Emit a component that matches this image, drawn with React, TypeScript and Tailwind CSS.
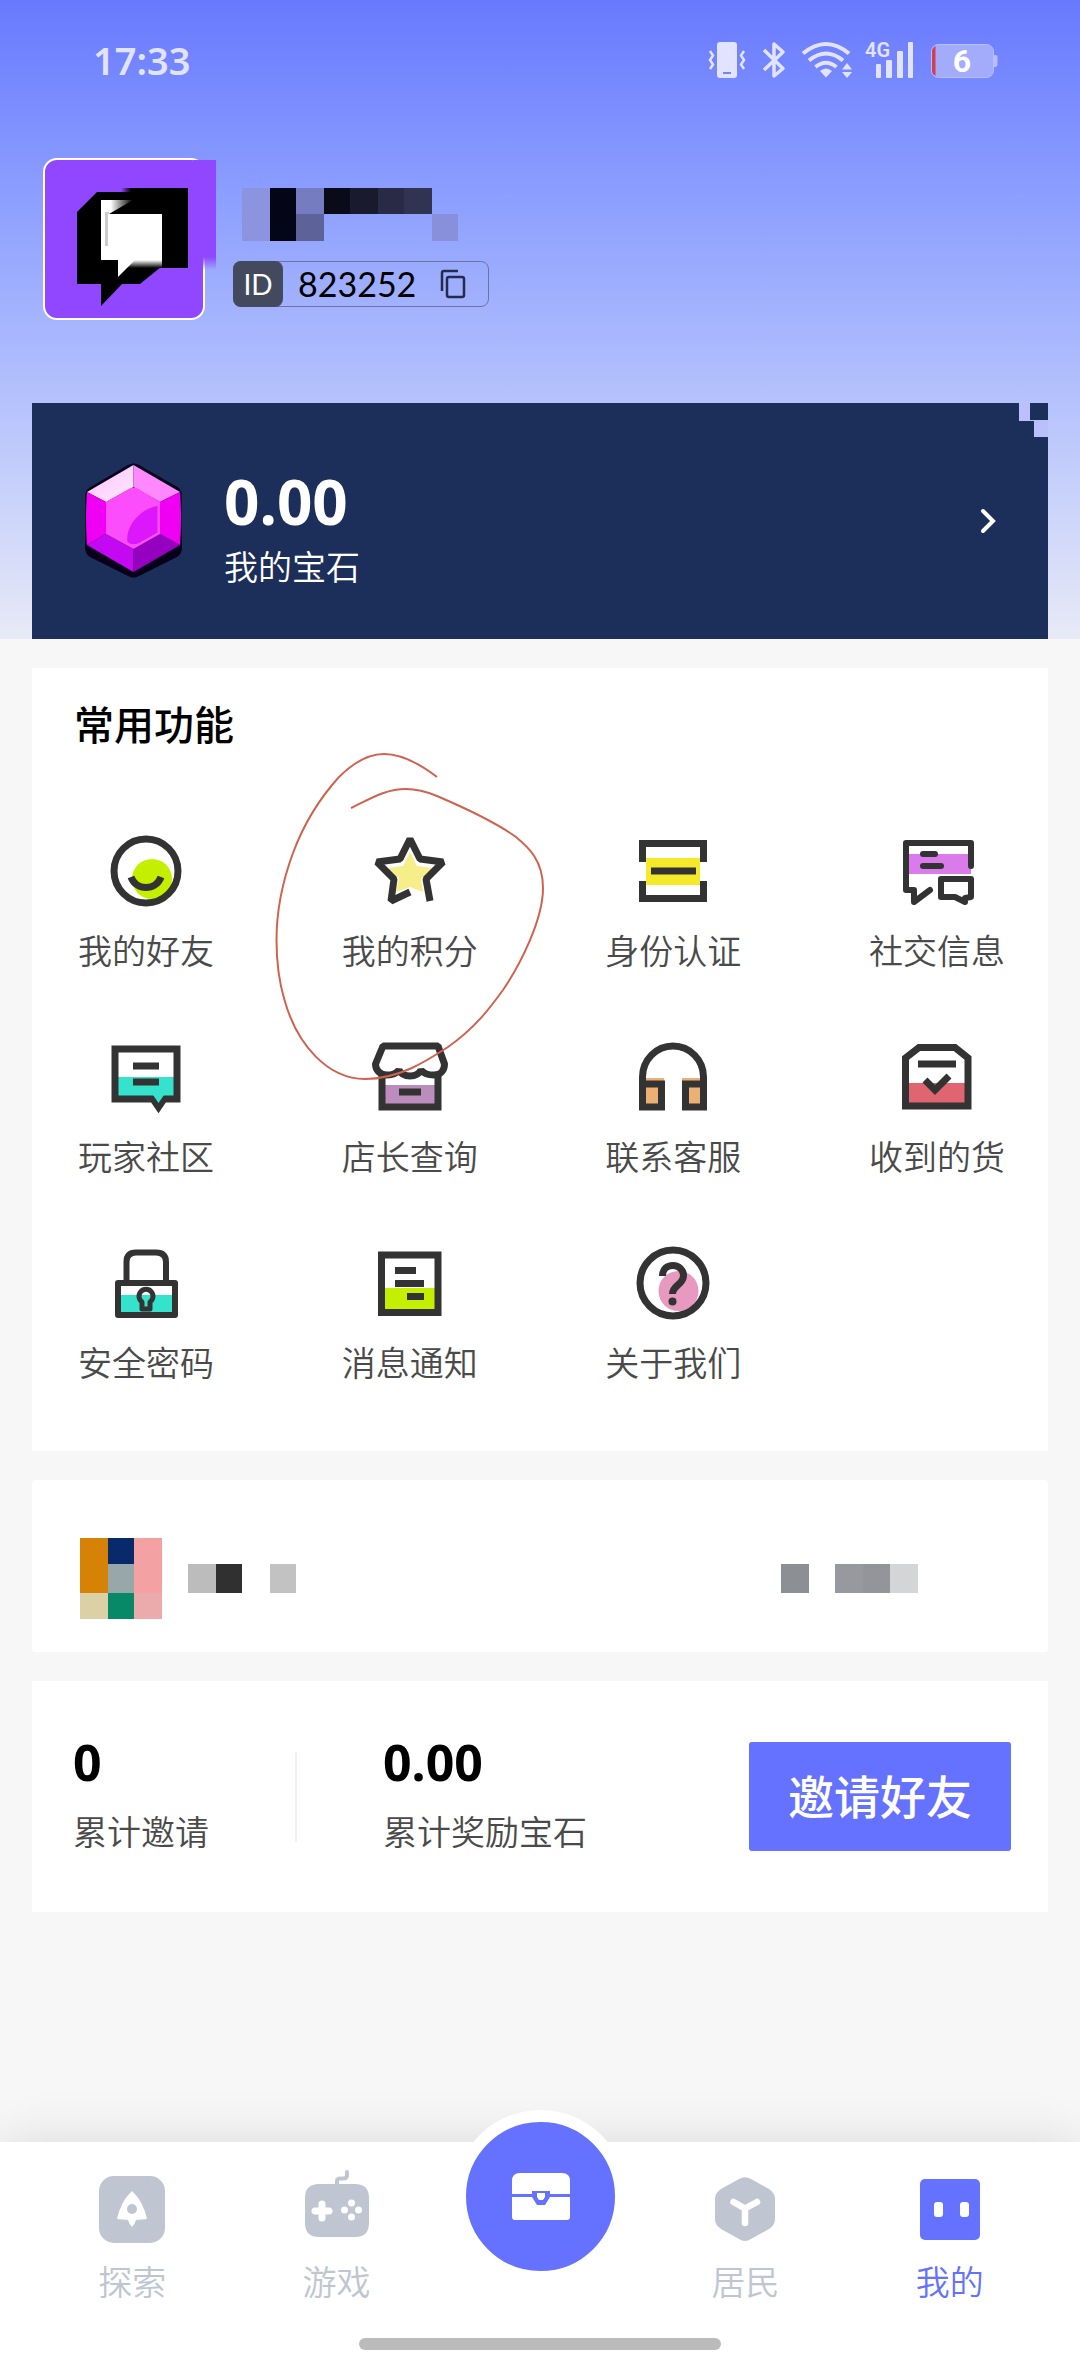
import { useState } from 'react';
import type { ReactNode } from 'react';

const INK = '#333333';

function StatusIcons() {
  return (
    <svg width="290" height="46" viewBox="0 -4 290 46" fill="#e2e4ff" aria-hidden="true">
      {/* vibrate */}
      <rect x="9" y="1" width="20" height="36" rx="3" />
      <rect x="15" y="31" width="8" height="2" fill="#7683fc" />
      <path
        d="M2 10L5 14.500 2 19 5 23.500 2 28M36 10L33 14.500 36 19 33 23.500 36 28"
        fill="none"
        stroke="#e2e4ff"
        strokeWidth="2.500"
      />
      {/* bluetooth */}
      <path
        d="M56 9L75 27.500 66 35V3L75 11 56 29"
        fill="none"
        stroke="#e2e4ff"
        strokeWidth="3.500"
        strokeLinejoin="round"
      />
      {/* wifi */}
      <g fill="none" stroke="#e2e4ff" strokeWidth="4">
        <path d="M95 12.500Q118 -6.500 141 12.500" />
        <path d="M101 19.500Q118 5.500 135 19.500" />
        <path d="M107.500 26Q118 17.500 128.500 26" />
      </g>
      <path d="M112 30Q118 25 124 30L118 36.500Z" />
      <path d="M139 22L144 28.500H134ZM139 37L144 31H134Z" />
      {/* signal */}
      <text x="157" y="16" fontSize="20" fontWeight="600" fontFamily="Roboto, sans-serif">
        4G
      </text>
      <rect x="168" y="23" width="5" height="14" rx="1" />
      <rect x="178" y="19" width="6" height="18" rx="1" />
      <rect x="189" y="10" width="6" height="27" rx="1" />
      <rect x="200" y="1" width="5" height="36" rx="1" />
      {/* battery */}
      <rect x="223.500" y="3.500" width="62" height="33" rx="7" fill="#a3abfb" stroke="#b7bdfd" />
      <path d="M286 14h1.500a2 2 0 0 1 2 2v8a2 2 0 0 1-2 2H286z" fill="#b7bdfd" />
      <path d="M227.500 5v30c-2-1-3.500-3-3.500-5V10c0-2 1.500-4 3.500-5z" fill="#d0404f" />
      <text
        x="254"
        y="31"
        textAnchor="middle"
        fontSize="32"
        fontWeight="700"
        fill="#ffffff"
        fontFamily="Roboto, sans-serif"
      >
        6
      </text>
    </svg>
  );
}

function Avatar() {
  return (
    <svg width="176" height="164" viewBox="0 0 176 164" className="shrink-0" role="img" aria-label="头像">
      <defs>
        <linearGradient id="bleed" x1="0" y1="0" x2="0" y2="1">
          <stop offset="0.88" stopColor="#9147ff" />
          <stop offset="1" stopColor="#9147ff" stopOpacity="0" />
        </linearGradient>
        <linearGradient id="edge" x1="0" y1="0" x2="1" y2="0">
          <stop offset="0" stopColor="#000" stopOpacity="0" />
          <stop offset="0.15" stopColor="#000" />
        </linearGradient>
        <linearGradient id="shineX" x1="0" y1="0" x2="1" y2="0">
          <stop offset="0" stopColor="#fff" />
          <stop offset="0.3" stopColor="#fff" />
          <stop offset="1" stopColor="#fff" stopOpacity="0" />
        </linearGradient>
        <linearGradient id="shineY" x1="0" y1="0" x2="0" y2="1">
          <stop offset="0" stopColor="#fff" />
          <stop offset="1" stopColor="#fff" stopOpacity="0" />
        </linearGradient>
      </defs>
      <rect x="1" y="1" width="160" height="160" rx="13" fill="#9147ff" stroke="#fff" strokeWidth="2" />
      <rect x="150" y="2" width="23" height="110" fill="url(#bleed)" />
      <path d="M34 54L54 34H134V96L97 126H79L58 148V126H34Z" />
      <rect x="78" y="30" width="67" height="80" fill="url(#edge)" />
      <path d="M58 42H90L66 56V102H58Z" fill="url(#shineX)" />
      <rect x="58" y="50" width="8" height="52" fill="#fff" />
      <rect x="62" y="54" width="4" height="34" fill="#cccccc" />
      <rect x="65" y="56" width="54" height="46" fill="#fff" />
      <rect x="84" y="102" width="35" height="8" fill="url(#shineY)" />
      <path d="M58 90H92V102L75 119V102H58Z" fill="#fff" />
    </svg>
  );
}

function MaskedName() {
  return (
    <svg width="216" height="53" viewBox="0 0 216 53" aria-hidden="true">
      <rect width="28" height="53" fill="#8c93df" />
      <rect x="28" width="26" height="53" fill="#040617" />
      <rect x="54" width="28" height="26" fill="#767cc0" />
      <rect x="54" y="26" width="28" height="27" fill="#5d6298" />
      <rect x="82" width="26" height="26" fill="#0a0b18" />
      <rect x="108" width="28" height="26" fill="#191a2e" />
      <rect x="136" width="26" height="26" fill="#292a46" />
      <rect x="162" width="28" height="26" fill="#313353" />
      <rect x="190" y="26" width="26" height="27" fill="#8890dc" />
    </svg>
  );
}

function Gem() {
  return (
    <svg width="100" height="116" viewBox="0 0 100 116" aria-hidden="true">
      <defs>
        <linearGradient id="gemLight" x1="0" y1="0" x2="1" y2="1">
          <stop offset="0" stopColor="#ffc0ff" />
          <stop offset="1" stopColor="#fbeaff" />
        </linearGradient>
      </defs>
      <path
        d="M44 2Q49.500 -1 55 2L95 25Q98 28 98 34V84Q98 91 93 94L55 113Q49.500 116 44 113L6 94Q1 91 1 84V34Q1 28 5 25Z"
        fill="#08001a"
      />
      <path d="M49.500 2L3 29 22 39 49.500 24Z" fill="url(#gemLight)" />
      <path d="M49.500 2L96 29 76 39 49.500 24Z" fill="#ff88ff" />
      <path d="M3 29L22 39V71L3 82Q1 55 3 29Z" fill="#ef00f5" />
      <path d="M96 29L76 39V71L96 82Q98 55 96 29Z" fill="#ef00f5" />
      <path d="M3 82L22 71 49.500 86V109Z" fill="#c408f2" />
      <path d="M96 82L76 71 49.500 86V109Z" fill="#9600c0" />
      <path d="M43 27Q49.500 22 56 27L76 39V71L49.500 86 22 71V39Z" fill="#fb4dfb" />
      <path d="M73.500 43V69.500L55 80Q48 83 43.500 79C41 62 58 45 73.500 43Z" fill="#dc17fb" />
    </svg>
  );
}

const features: { label: string; icon: ReactNode }[] = [
  {
    label: '我的好友',
    icon: (
      <>
        <circle cx="46" cy="48" r="20" fill="#c4f000" stroke="none" />
        <circle cx="40" cy="40" r="32" />
        <path d="M25 46C30 60 50 60 55 46" />
      </>
    ),
  },
  {
    label: '我的积分',
    icon: (
      <>
        <path
          d="M40 21L47 35 62 37 51 48 53 61 40 56 26 61 29 47 18 37 33 35Z"
          fill="#f6ee88"
          stroke="none"
        />
        <path d="M60 70L56 48 73 31 50 28 40 8 30 28 7 31 24 48 21 70 40 61" strokeLinejoin="bevel" />
      </>
    ),
  },
  {
    label: '身份认证',
    icon: (
      <>
        <rect x="13" y="27" width="54" height="27" fill="#f4ea2a" stroke="none" />
        <path d="M9.500 31V12.500H70.500V31M9.500 50V67.500H70.500V50M18 40H63" />
      </>
    ),
  },
  {
    label: '社交信息',
    icon: (
      <g strokeWidth="6" strokeLinecap="round" strokeLinejoin="round">
        <rect x="11" y="23" width="63" height="20" fill="#d97bea" stroke="none" />
        <path d="M74 35V12H9V59H17V71L33 59M26 23H38M26 35H44" />
        <path d="M44 48H74V66L68 67V71L58 66H44Z" />
      </g>
    ),
  },
  {
    label: '玩家社区',
    icon: (
      <>
        <rect x="10" y="40" width="60" height="20" fill="#35e3cd" stroke="none" />
        <path d="M9 12H71V62H58L52.500 70 47 62H9ZM27 29H53M27 45H53" />
        <path d="M47 58H58L52.500 66Z" fill="#35e3cd" stroke="none" />
      </>
    ),
  },
  {
    label: '店长查询',
    icon: (
      <>
        <rect x="12" y="48" width="56" height="22" fill="#bb8dbd" stroke="none" />
        <path d="M12 38V70H68V38M29 55H51" />
        <path
          d="M13 9H68L74.500 27C74.500 34 70 38 64 38C58 38 54 37 51 33C49 37 45 39 40 39C35 39 31 37 29 33C26 37 22 38 17 38C10 38 5.500 33 5.500 27Z"
          strokeLinejoin="bevel"
        />
      </>
    ),
  },
  {
    label: '联系客服',
    icon: (
      <>
        <path d="M9 41H31V70H9ZM49 41H71V70H49Z" fill="#edb074" stroke="none" />
        <path d="M9.500 47H28.500V70H9.500V40A30.500 31 0 0 1 70.500 40V70H52.500V47H70.500" />
      </>
    ),
  },
  {
    label: '收到的货',
    icon: (
      <>
        <rect x="10" y="46" width="60" height="22" fill="#df6570" stroke="none" />
        <path d="M8.500 21L22 10.500H58L71 21V69H8.500ZM21 27H59M28 43L38 53 52 39" />
      </>
    ),
  },
  {
    label: '安全密码',
    icon: (
      <g strokeWidth="6" strokeLinejoin="round">
        <rect x="12" y="52" width="57" height="20" fill="#35e3cd" stroke="none" />
        <path d="M12 40H69V72H12ZM20.500 40V19Q20.500 9.500 30 9.500H50Q60 9.500 60 19V40" />
        <path d="M36 59V66H44V59A7 7 0 1 0 36 59Z" strokeWidth="5" />
      </g>
    ),
  },
  {
    label: '消息通知',
    icon: (
      <>
        <rect x="12" y="45" width="56" height="24" fill="#c4f000" stroke="none" />
        <path d="M11.500 12H68V69.500H11.500ZM25 27.500H46M25 40.500H54M37 53.500H54" />
      </>
    ),
  },
  {
    label: '关于我们',
    icon: (
      <>
        <circle cx="45.500" cy="48" r="20" fill="#e899c0" stroke="none" />
        <circle cx="40" cy="40" r="33" />
        <path d="M29.500 33C29.500 26 34 22.500 40 22.500C46 22.500 50.500 27 50.500 32.500C50.500 42 39.500 42 39.500 51" />
        <circle cx="39.500" cy="58.500" r="4" fill={INK} stroke="none" />
      </>
    ),
  },
];

const exploreIcon = (
  <>
    <rect x="7" y="6" width="66" height="67" rx="15" />
    <path d="M40 21Q51 31 55 49L44 50Q43 54 40 57Q37 54 36 50L25 49Q29 31 40 21Z" fill="#fff" />
    <circle cx="40" cy="39" r="5" />
  </>
);

const gameIcon = (
  <>
    <path d="M22 14H58Q72 14 72 28V53Q72 67 58 67H22Q8 67 8 53V28Q8 14 22 14Z" />
    <path
      d="M40 15V11Q40 8.500 43.500 8.500H46Q50 8.500 50 5V2"
      fill="none"
      stroke="currentColor"
      strokeWidth="4"
      strokeLinecap="round"
    />
    <path d="M25 34V48M18 41H32" stroke="#fff" strokeWidth="7" strokeLinecap="round" />
    <g fill="#fff">
      <circle cx="54.500" cy="33" r="3.500" />
      <circle cx="54.500" cy="47" r="3.500" />
      <circle cx="47.500" cy="40" r="3.500" />
      <circle cx="61.500" cy="40" r="3.500" />
    </g>
  </>
);

const residentIcon = (
  <>
    <path d="M34 9Q40 5.500 46 9L64 19Q70 23 70 29V49Q70 55 64 59L46 69Q40 73 34 69L16 59Q10 55 10 49V29Q10 23 16 19Z" />
    <path
      d="M28.500 32L40 38.500 52 32M40 38.500V53"
      fill="none"
      stroke="#fff"
      strokeWidth="6.500"
      strokeLinecap="round"
    />
  </>
);

const mineIcon = (
  <>
    <rect x="10" y="9" width="60" height="61" rx="5" />
    <rect x="24" y="32" width="9" height="15" rx="3" fill="#fff" />
    <rect x="50" y="32" width="9" height="15" rx="3" fill="#fff" />
  </>
);

function TabItem({
  label,
  icon,
  active,
  onSelect,
}: {
  label: string;
  icon: ReactNode;
  active: boolean;
  onSelect: () => void;
}) {
  return (
    <button
      type="button"
      onClick={onSelect}
      className={
        active
          ? 'flex flex-col items-center pt-7 text-[#6571ff]'
          : 'flex flex-col items-center pt-7 text-[#c0c6d1]'
      }
    >
      <svg width="80" height="80" viewBox="0 0 80 80" fill="currentColor" aria-hidden="true">
        {icon}
      </svg>
      <span className="mt-2 text-[34px] leading-[48px] font-[350]">{label}</span>
    </button>
  );
}

export default function App() {
  const [tab, setTab] = useState('我的');

  return (
    <div className="flex min-h-screen flex-col bg-[#f7f7f7] font-['Noto_Sans','Noto_Sans_CJK_SC',sans-serif] text-black">
      <header className="bg-linear-to-b from-[#6979fe] to-[#e8eaf6] px-8 pt-[37px]">
        <div className="flex items-center justify-between pr-[50px] pl-[61px]">
          <time className="text-[38px] leading-[46px] font-semibold text-[#e2e4ff]">17:33</time>
          <StatusIcons />
        </div>

        <div className="mt-[75px] flex items-start gap-[14px] pl-[11px]">
          <Avatar />
          <div className="pt-[30px]">
            <div className="pl-[9px]">
              <MaskedName />
            </div>
            <div className="mt-5 flex h-[46px] w-64 items-center rounded-lg border border-[#6d73a8] font-['Lato',sans-serif]">
              <span className="-m-px flex h-[46px] w-[50px] items-center justify-center rounded-lg bg-[#434a5e] text-[28px] text-white">
                ID
              </span>
              <span className="ml-4 text-[34px] leading-[44px]">823252</span>
              <button type="button" aria-label="复制" className="ml-6">
                <svg width="26" height="30" viewBox="0 0 26 30" fill="none" stroke="#262a4d" strokeWidth="2.500">
                  <rect x="7" y="8" width="17" height="20" rx="2" />
                  <path d="M2 22V4Q2 2 4 2H18" />
                </svg>
              </button>
            </div>
          </div>
        </div>

        <a
          href="#gems"
          className="relative mt-[81px] flex h-[236px] items-center bg-[#1c2e5a] pr-[52px] pl-[52px] text-white"
        >
          <Gem />
          <div className="ml-10 flex-1 pt-5">
            <div className="text-[62px] leading-[72px] font-bold">0.00</div>
            <div className="text-[34px] leading-[60px] font-[350]">我的宝石</div>
          </div>
          <svg
            width="16"
            height="26"
            viewBox="0 0 16 26"
            fill="none"
            stroke="#fff"
            strokeWidth="4"
            strokeLinecap="round"
            aria-hidden="true"
          >
            <path d="M3 3L13 13 3 23" />
          </svg>
          <svg
            width="30"
            height="34"
            viewBox="0 0 30 34"
            fill="#bac0fa"
            className="absolute top-0 right-0"
            aria-hidden="true"
          >
            <path d="M1 0H12V17H30V34H16V18H1Z" />
          </svg>
        </a>
      </header>

      <main className="flex flex-col gap-[29px] px-8 py-[29px]">
        <section className="relative bg-white pt-[29px] pr-[43px] pb-16 pl-[46px]">
          <h2 className="-ml-1 text-[40px] leading-[56px] font-medium">常用功能</h2>
          <div className="mt-[78px] grid grid-cols-[repeat(4,auto)] justify-between gap-y-[62px]">
            {features.map((item) => (
              <a key={item.label} href="#feature" className="flex flex-col items-center">
                <svg
                  width="80"
                  height="80"
                  viewBox="0 0 80 80"
                  fill="none"
                  stroke={INK}
                  strokeWidth="7"
                  aria-hidden="true"
                >
                  {item.icon}
                </svg>
                <span className="mt-4 text-[34px] leading-[48px] font-[350] text-[#4a4a4a]">{item.label}</span>
              </a>
            ))}
          </div>
          {/* hand-drawn loop around 我的积分 */}
          <svg
            width="280"
            height="345"
            viewBox="270 745 280 345"
            fill="none"
            stroke="#cf6350"
            strokeWidth="2"
            className="pointer-events-none absolute top-[77px] left-[238px]"
            aria-hidden="true"
          >
            <path d="M437 777C420 764 402 754 384 754C366 754 351 765 339 777C320 798 303 826 293 853C283 880 276.500 910 276.500 940C276.500 965 280 985 284.500 1000C297 1045 328 1079 365 1079C400 1079 428 1060 448 1047C475 1028 490 1008 503 990C520 965 543 920 543 888C543 860 528 847 516 837C498 824 465 808 437 796C425 791 415 789 406 789C385 789 370 799 351 808" />
          </svg>
        </section>

        <section className="flex h-[172px] items-center rounded-sm bg-white pt-6 pr-[130px] pl-12">
          <svg width="82" height="81" viewBox="0 0 82 81" aria-hidden="true">
            <rect width="28" height="55" fill="#d68206" />
            <rect x="28" width="26" height="26" fill="#082a6a" />
            <rect x="54" width="28" height="55" fill="#f4a1a3" />
            <rect x="28" y="26" width="26" height="29" fill="#98a7aa" />
            <rect y="55" width="28" height="26" fill="#dcd0a7" />
            <rect x="28" y="55" width="26" height="26" fill="#078866" />
            <rect x="54" y="55" width="28" height="26" fill="#ebaaac" />
          </svg>
          <svg width="108" height="29" viewBox="0 0 108 29" className="ml-[26px]" aria-hidden="true">
            <rect width="28" height="29" fill="#bcbcbc" />
            <rect x="28" width="26" height="29" fill="#303030" />
            <rect x="82" width="26" height="29" fill="#c2c2c2" />
          </svg>
          <svg width="137" height="29" viewBox="0 0 137 29" className="ml-auto" aria-hidden="true">
            <rect width="28" height="29" fill="#8c9095" />
            <rect x="54" width="28" height="29" fill="#98999f" />
            <rect x="82" width="27" height="29" fill="#94959b" />
            <rect x="109" width="28" height="29" fill="#d4d5d7" />
          </svg>
        </section>

        <section className="flex h-[231px] items-center bg-white pr-[37px] pl-[41px]">
          <div className="w-[222px]">
            <div className="text-[50px] leading-[70px] font-bold">0</div>
            <div className="text-[34px] leading-[70px] font-[350] text-[#4a4a4a]">累计邀请</div>
          </div>
          <div className="h-[90px] w-[2px] bg-[#f0f0f0]" />
          <div className="ml-[86px] flex-1">
            <div className="text-[50px] leading-[70px] font-bold">0.00</div>
            <div className="text-[34px] leading-[70px] font-[350] text-[#4a4a4a]">累计奖励宝石</div>
          </div>
          <button
            type="button"
            className="h-[109px] w-[262px] rounded-[3px] bg-[#6571ff] text-[46px] font-medium text-white"
          >
            邀请好友
          </button>
        </section>
      </main>

      <nav className="mt-auto bg-white shadow-[0_0_50px_rgba(0,0,0,0.12)]">
        <div className="grid grid-cols-5 items-start pr-7 pl-[30px]">
          <TabItem label="探索" icon={exploreIcon} active={tab === '探索'} onSelect={() => setTab('探索')} />
          <TabItem label="游戏" icon={gameIcon} active={tab === '游戏'} onSelect={() => setTab('游戏')} />
          <div className="flex justify-center">
            <button
              type="button"
              aria-label="宝箱"
              className="-mt-8 -mb-4 flex size-[173px] items-center justify-center rounded-full border-12 border-white bg-[#6571ff]"
            >
              <svg width="58" height="47" viewBox="0 0 58 47" fill="#fff">
                <path d="M8 0H50Q58 0 58 8V21H38V18H20V21H0V8Q0 0 8 0Z" />
                <path d="M0 24H20L25 32H33L38 24H58V44Q58 47 55 47H3Q0 47 0 44Z" />
                <path d="M25 20H33V24L31 27H27L25 24Z" />
              </svg>
            </button>
          </div>
          <TabItem label="居民" icon={residentIcon} active={tab === '居民'} onSelect={() => setTab('居民')} />
          <TabItem label="我的" icon={mineIcon} active={tab === '我的'} onSelect={() => setTab('我的')} />
        </div>
        <div className="mx-auto mt-8 mb-6 h-3 w-[362px] rounded-full bg-[#bbbbbb]" />
      </nav>
    </div>
  );
}
